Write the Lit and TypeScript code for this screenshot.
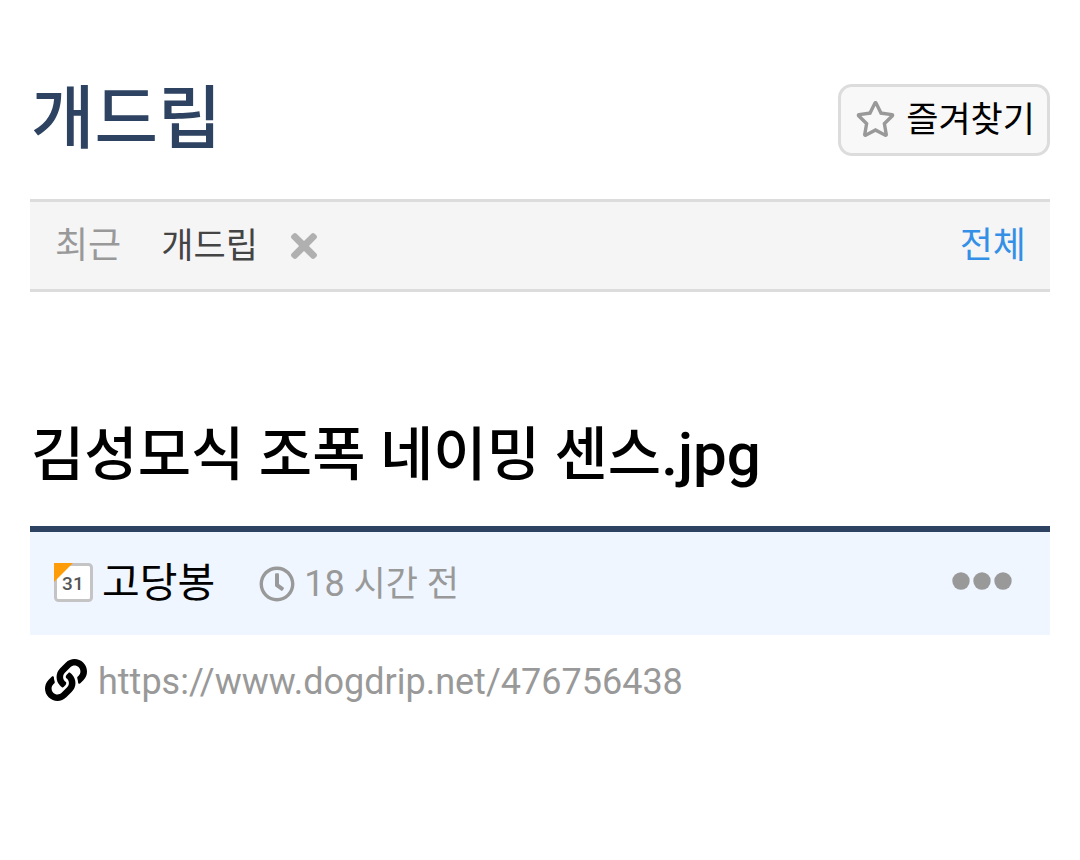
import { LitElement, html, css, svg } from "lit";
import { customElement } from "lit/decorators.js";

const starPath = "M528.1 171.5L382 150.2 316.7 17.8c-11.7-23.6-45.6-23.9-57.4 0L194 150.2 47.9 171.5c-26.2 3.8-36.7 36.1-17.7 54.6l105.7 103-25 145.5c-4.5 26.3 23.2 46 46.4 33.7L288 439.6l130.7 68.7c23.2 12.2 50.9-7.4 46.4-33.7l-25-145.5 105.7-103c19-18.5 8.5-50.8-17.7-54.6zM388.6 312.3l23.7 138.4L288 385.4l-124.3 65.3 23.7-138.4-100.6-98 139-20.2 62.2-126 62.2 126 139 20.2-100.6 98z";
const clockPath = "M256 8C119 8 8 119 8 256s111 248 248 248 248-111 248-248S393 8 256 8zm0 448c-110.5 0-200-89.5-200-200S145.5 56 256 56s200 89.5 200 200-89.5 200-200 200zm61.8-104.4l-84.9-61.7c-3.1-2.3-4.9-5.9-4.9-9.7V116c0-6.6 5.4-12 12-12h32c6.6 0 12 5.4 12 12v141.7l66.8 48.6c5.4 3.9 6.5 11.4 2.6 16.8L334.6 349c-3.9 5.3-11.4 6.5-16.8 2.6z";
const linkPath = "M326.612 185.391c59.747 59.809 58.927 155.698.36 214.59-.11.12-.24.25-.36.37l-67.2 67.2c-59.27 59.27-155.699 59.262-214.96 0-59.27-59.26-59.27-155.7 0-214.96l37.106-37.106c9.84-9.84 26.786-3.3 27.294 10.606.648 17.722 3.826 35.527 9.69 52.721 1.986 5.822.567 12.262-3.783 16.612l-13.087 13.087c-28.026 28.026-28.905 73.66-1.155 101.96 28.024 28.579 74.086 28.749 102.325.51l67.2-67.19c28.191-28.191 28.073-73.757 0-101.83-3.701-3.694-7.429-6.564-10.341-8.569a16.037 16.037 0 0 1-6.947-12.606c-.396-10.567 3.348-21.456 11.698-29.806l21.054-21.055c5.521-5.521 14.182-6.199 20.584-1.731a152.482 152.482 0 0 1 20.522 17.197zM467.547 44.449c-59.261-59.262-155.69-59.27-214.96 0l-67.2 67.2c-.12.12-.25.25-.36.37-58.566 58.892-59.387 154.781.36 214.59a152.454 152.454 0 0 0 20.521 17.196c6.402 4.468 15.064 3.789 20.584-1.731l21.054-21.055c8.35-8.35 12.094-19.239 11.698-29.806a16.037 16.037 0 0 0-6.947-12.606c-2.912-2.005-6.64-4.875-10.341-8.569-28.073-28.073-28.191-73.639 0-101.83l67.2-67.19c28.239-28.239 74.3-28.069 102.325.51 27.75 28.3 26.872 73.934-1.155 101.96l-13.087 13.087c-4.35 4.35-5.769 10.79-3.783 16.612 5.864 17.194 9.042 34.999 9.69 52.721.509 13.906 17.454 20.446 27.294 10.606l37.106-37.106c59.271-59.259 59.271-155.699.001-214.959z";
const timesPath = "M242.72 256l100.07-100.07c12.28-12.28 12.28-32.19 0-44.48l-22.24-22.24c-12.28-12.28-32.19-12.28-44.48 0L176 189.28 75.93 89.21c-12.28-12.28-32.19-12.28-44.48 0L9.21 111.45c-12.28 12.28-12.28 32.19 0 44.48L109.28 256 9.21 356.07c-12.28 12.28-12.28 32.19 0 44.48l22.24 22.24c12.28 12.28 32.2 12.28 44.48 0L176 322.72l100.07 100.07c12.28 12.28 32.2 12.28 44.48 0l22.24-22.24c12.28-12.28 12.28-32.19 0-44.48L242.72 256z";

const icon = (name: string, viewBox: string, path: string) =>
  html`<svg class="icon ${name}" viewBox=${viewBox} aria-hidden="true">${svg`<path d=${path} />`}</svg>`;

@customElement("app-root")
export class AppRoot extends LitElement {
  static styles = css`
    :host {
      display: block;
      padding: 72px 30px;
      background: #fff;
      color: #000;
      font-family: Roboto, "Noto Sans CJK KR", sans-serif;
      font-size: 36px;
      line-height: 48px;
    }
    h1, h2 { margin: 0; font-weight: 500; }
    a { color: inherit; text-decoration: none; }
    button { font: inherit; color: inherit; border: 0; padding: 0; background: none; cursor: pointer; }
    .icon { display: block; flex: none; fill: currentColor; }
    .board { display: flex; align-items: center; justify-content: space-between; }
    .board-name { padding-left: 1px; font-size: 69px; line-height: 96px; color: #2e4361; }
    .favorite {
      display: flex; align-items: center; gap: 10px;
      height: 72px; padding: 0 12px 2px 14px; box-sizing: border-box;
      border: 3px solid #dcdcdc; border-radius: 14px; background: #f8f8f8;
      font-size: 35px;
    }
    .favorite-text { padding-top: 4px; }
    .star { width: 41px; height: 36px; color: #999; }
    .recent {
      display: flex; align-items: center;
      margin-top: 31px; padding: 18px 24px 18px 25px;
      border: solid #dcdcdc; border-width: 3px 0; background: #f5f5f5;
    }
    .label { color: #999; margin-right: 40px; }
    .visited { padding-top: 3px; font-size: 35px; color: #444; }
    .remove { margin-left: 33px; }
    .times { width: 26px; height: 38px; color: #b0b0b0; }
    .all { margin-left: auto; color: #3490e6; }
    .title { margin-top: 121px; padding-left: 1px; font-size: 58px; line-height: 84px; }
    .extension { font-size: 60px; line-height: 1; }
    .meta {
      display: flex; align-items: center;
      margin-top: 29px; padding: 24px 24px 26px;
      border-top: 6px solid #2e4361; background: #eff6ff;
    }
    .avatar { width: 39px; height: 39px; margin-right: 9px; }
    .digits { font: 500 19px Roboto, sans-serif; fill: #555; }
    .author { font-size: 41px; }
    .time { display: flex; align-items: center; gap: 9px; margin-left: 44px; padding-top: 2px; color: #999; }
    .time-text { padding-top: 2px; }
    .unit { font-size: 35px; }
    .clock { width: 36px; height: 36px; }
    .more { margin: 0 14px 0 auto; padding-bottom: 3px; color: #999; }
    .dots { width: 60px; height: 18px; }
    .source { display: flex; align-items: center; gap: 11px; padding: 18px 15px; }
    .link { width: 42px; height: 42px; }
    .url { padding-top: 5px; color: #999; }
  `;

  render() {
    return html`
      <header class="board">
        <h1 class="board-name"><a href="#">개드립</a></h1>
        <button class="favorite" type="button">${icon("star", "0 0 576 512", starPath)}<span class="favorite-text">즐겨찾기</span></button>
      </header>
      <nav class="recent">
        <span class="label">최근</span>
        <a class="visited" href="#">개드립</a>
        <button class="remove" type="button" aria-label="삭제">${icon("times", "0 0 352 512", timesPath)}</button>
        <a class="all" href="#">전체</a>
      </nav>
      <article>
        <h2 class="title">김성모식 조폭 네이밍 센스<span class="extension">.jpg</span></h2>
        <div class="meta">
          <svg class="icon avatar" viewBox="0 0 39 39" aria-hidden="true">
            <rect x="1.5" y="1.5" width="36" height="36" rx="3" fill="#fff" stroke="#c4c4c4" stroke-width="3" />
            <path d="M0 0H19L0 19Z" fill="#ff9c0a" />
            <text class="digits" x="8 19" y="27">31</text>
          </svg>
          <a class="author" href="#">고당봉</a>
          <span class="time">${icon("clock", "0 0 512 512", clockPath)}<span class="time-text">18 <span class="unit">시간 전</span></span></span>
          <button class="more" type="button" aria-label="더보기">
            <svg class="icon dots" viewBox="0 0 60 18" aria-hidden="true">
              <circle cx="9" cy="9" r="8.7" /><circle cx="30" cy="9" r="8.7" /><circle cx="51" cy="9" r="8.7" />
            </svg>
          </button>
        </div>
        <div class="source">
          ${icon("link", "0 0 512 512", linkPath)}
          <a class="url" href="https://www.dogdrip.net/476756438">https://www.dogdrip.net/476756438</a>
        </div>
      </article>
    `;
  }
}
